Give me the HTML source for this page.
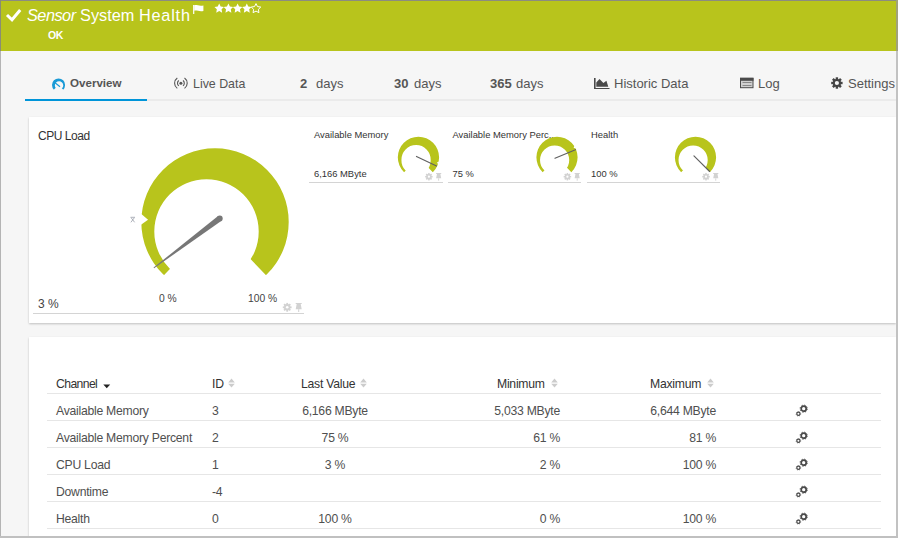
<!DOCTYPE html>
<html><head><meta charset="utf-8">
<style>
*{box-sizing:border-box;margin:0;padding:0}
html,body{width:898px;height:538px;overflow:hidden;background:#f6f6f6;font-family:"Liberation Sans",sans-serif;color:#555}
.a{position:absolute;white-space:nowrap}
.ttl{font-size:16.3px;color:#fff;line-height:16px}
.tab{font-size:13px;color:#555;line-height:13px}
.panel{position:absolute;background:#fff;box-shadow:0 1px 2px rgba(0,0,0,.22)}
.th{font-size:12.2px;letter-spacing:-0.25px;color:#333;line-height:12px}
.td{font-size:12.2px;letter-spacing:-0.25px;color:#4f4f4f;line-height:12px}
.hl{position:absolute;height:1px;background:#e6e6e6}
.sm{font-size:9.4px;color:#333;line-height:10px}
</style></head><body>
<div class="a" style="left:1px;top:1px;width:895px;height:50px;background:#b8c41c"></div>
<svg class="a" style="left:0;top:0" width="898" height="51"><path d="M7 15 L12 19.8 L20.2 10" fill="none" stroke="#fff" stroke-width="3"/><path d="M193.7 5 V14" stroke="#fff" stroke-width="1.2"/><path d="M194.2 5.2 C196.5 4.3 199 6.5 203.4 5.4 V11 C199 12 196.5 9.8 194.2 10.8 Z" fill="#fff"/><path d="M219.2,3.6 L217.73,6.58 L214.44,7.05 L216.82,9.37 L216.26,12.65 L219.2,11.1 L222.14,12.65 L221.58,9.37 L223.96,7.05 L220.67,6.58 Z" fill="#fff"/><path d="M228.4,3.6 L226.93,6.58 L223.64,7.05 L226.02,9.37 L225.46,12.65 L228.4,11.1 L231.34,12.65 L230.78,9.37 L233.16,7.05 L229.87,6.58 Z" fill="#fff"/><path d="M237.6,3.6 L236.13,6.58 L232.84,7.05 L235.22,9.37 L234.66,12.65 L237.6,11.1 L240.54,12.65 L239.98,9.37 L242.36,7.05 L239.07,6.58 Z" fill="#fff"/><path d="M246.8,3.6 L245.33,6.58 L242.04,7.05 L244.42,9.37 L243.86,12.65 L246.8,11.1 L249.74,12.65 L249.18,9.37 L251.56,7.05 L248.27,6.58 Z" fill="#fff"/><path d="M256,3.6 L254.53,6.58 L251.24,7.05 L253.62,9.37 L253.06,12.65 L256,11.1 L258.94,12.65 L258.38,9.37 L260.76,7.05 L257.47,6.58 Z" fill="none" stroke="#fff" stroke-width="1" stroke-linejoin="miter"/></svg>
<div class="a ttl" style="left:27px;top:7px"><i style="letter-spacing:-0.5px">Sensor</i> System <span style="letter-spacing:0.8px">Health</span></div>
<div class="a" style="left:48px;top:30px;font-size:10.5px;letter-spacing:-0.4px;font-weight:bold;color:#fff;line-height:11px">OK</div>
<div class="a" style="left:25px;top:99px;width:122px;height:2px;background:#0095d9"></div>
<div class="a" style="left:147px;top:99px;width:749px;height:2px;background:#ebebeb"></div>
<svg class="a" style="left:0;top:70px" width="80" height="25"><g transform="translate(0,-70)"><clipPath id="ov"><path d="M58.55 85 L49 94.55 L49 75.45 L68.1 75.45 L68.1 94.55 Z"/></clipPath><path d="M52 85 a6.55 6.55 0 1 0 13.1 0 a6.55 6.55 0 1 0 -13.1 0 Z M54.85 85.4 a4.2 4.2 0 1 0 8.4 0 a4.2 4.2 0 1 0 -8.4 0 Z" fill="#1a9ad6" fill-rule="evenodd" clip-path="url(#ov)"/><path d="M55 82.8 L60 86.8" stroke="#1a9ad6" stroke-width="1.2"/></g></svg>
<div class="a tab" style="left:70px;top:76px;font-size:11.6px;font-weight:bold">Overview</div>
<svg class="a" style="left:0;top:70px" width="260" height="25"><g transform="translate(0,-70)"><circle cx="180.9" cy="83.2" r="1.5" fill="#555"/><path d="M182.99 80.52 A3.4 3.4 0 0 1 182.99 85.88 M178.81 80.52 A3.4 3.4 0 0 0 178.81 85.88 M184.51 78.04 A6.3 6.3 0 0 1 184.51 88.36 M177.29 78.04 A6.3 6.3 0 0 0 177.29 88.36" fill="none" stroke="#555" stroke-width="1.1"/></g></svg>
<div class="a tab" style="left:193px;top:78px;font-size:12.4px">Live Data</div>
<div class="a tab" style="left:300px;top:77px"><b>2</b></div><div class="a tab" style="left:316px;top:77px">days</div>
<div class="a tab" style="left:394px;top:77px"><b>30</b></div><div class="a tab" style="left:414px;top:77px">days</div>
<div class="a tab" style="left:490px;top:77px"><b>365</b></div><div class="a tab" style="left:516px;top:77px">days</div>
<svg class="a" style="left:590px;top:74px" width="22" height="18"><g transform="translate(-590,-74)"><rect x="594" y="78" width="1.6" height="11" fill="#4a4a4a"/><rect x="594" y="88" width="15.5" height="1" fill="#4a4a4a"/><path d="M596.3 86.8 L596.3 82.5 L599.5 79 L603.4 83 L606.4 80.8 L608.3 86.8 Z" fill="#4a4a4a"/></g></svg>
<div class="a tab" style="left:614px;top:77px">Historic Data</div>
<svg class="a" style="left:736px;top:74px" width="22" height="18"><g transform="translate(-736,-74)"><rect x="740.5" y="78.3" width="12.5" height="9.4" fill="#d0d0d0" stroke="#4a4a4a" stroke-width="1"/><rect x="740" y="77.8" width="13.5" height="3" fill="#4a4a4a"/><rect x="742.5" y="82" width="9" height="1" fill="#888"/><rect x="742.5" y="85" width="9" height="1" fill="#888"/></g></svg>
<div class="a tab" style="left:758px;top:77px">Log</div>
<svg class="a" style="left:826px;top:74px" width="22" height="18"><g transform="translate(10.9,9)" fill="#444"><circle r="4.1"/><rect x="-1.2" y="-5.7" width="2.4" height="11.4" transform="rotate(0)"/><rect x="-1.2" y="-5.7" width="2.4" height="11.4" transform="rotate(45)"/><rect x="-1.2" y="-5.7" width="2.4" height="11.4" transform="rotate(90)"/><rect x="-1.2" y="-5.7" width="2.4" height="11.4" transform="rotate(135)"/><circle r="2.1" fill="#f6f6f6"/></g></svg>
<div class="a tab" style="left:848px;top:77px">Settings</div>
<div class="panel" style="left:29px;top:117px;width:867px;height:206px"></div>
<div class="a" style="left:38px;top:130px;font-size:12px;letter-spacing:-0.45px;color:#333;line-height:12px">CPU Load</div>
<div class="a" style="left:38px;top:298px;font-size:12px;color:#444;line-height:12px">3 %</div>
<div class="hl" style="left:33px;top:313px;width:271px;background:#d4d4d4"></div>
<div class="a sm" style="left:314px;top:130px">Available Memory</div>
<div class="a sm" style="left:314px;top:169px">6,166 MByte</div>
<div class="hl" style="left:309px;top:182px;width:134px;background:#d4d4d4"></div>
<div class="a sm" style="left:452.5px;top:130px">Available Memory Perc...</div>
<div class="a sm" style="left:452.5px;top:169px">75 %</div>
<div class="hl" style="left:448px;top:182px;width:133px;background:#d4d4d4"></div>
<div class="a sm" style="left:591px;top:130px">Health</div>
<div class="a sm" style="left:591px;top:169px">100 %</div>
<div class="hl" style="left:587px;top:182px;width:133px;background:#d4d4d4"></div>
<div class="a" style="left:159px;top:293px;font-size:10.3px;color:#444;line-height:11px">0 %</div>
<div class="a" style="left:248px;top:293px;font-size:10.3px;color:#444;line-height:11px">100 %</div>
<svg class="a" style="left:0;top:0" width="898" height="538"><clipPath id="g0c"><path d="M215 222 L128.1 312.62 L89.45 96.45 L340.55 96.45 L301.9 312.62 Z"/></clipPath><path d="M141.3 222 a73.7 73.7 0 1 0 147.4 0 a73.7 73.7 0 1 0 -147.4 0 Z M154.3 231.5 a52.2 52.2 0 1 0 104.4 0 a52.2 52.2 0 1 0 -104.4 0 Z" fill="#b8c41c" fill-rule="evenodd" clip-path="url(#g0c)"/><path d="M141.04 213.81 L148.04 219.66 L140.65 225.01 Z" fill="#fff"/><path d="M218.06 216.08 L153.58 267.61 L154.06 268.25 L221.54 220.72 Z" fill="#777"/><circle cx="219.8" cy="218.4" r="2.9" fill="#777"/><path d="M130.5 217.3 H135 M131.2 217.8 L134.6 222.3 M134.3 217.8 L130.9 222.3" stroke="#9aa0aa" stroke-width="0.8" fill="none"/><clipPath id="g1c"><path d="M418.45 157.35 L386.63 190.53 L372.48 111.38 L464.42 111.38 L450.27 190.53 Z"/></clipPath><path d="M397.8 157.35 a20.65 20.65 0 1 0 41.3 0 a20.65 20.65 0 1 0 -41.3 0 Z M401.44 160.01 a14.63 14.63 0 1 0 29.25 0 a14.63 14.63 0 1 0 -29.25 0 Z" fill="#b8c41c" fill-rule="evenodd" clip-path="url(#g1c)"/><path d="M438.41 164.51 L436.89 162.46 L439.25 161.49 Z" fill="#fff"/><line x1="416.47" y1="156.4" x2="436.54" y2="166.01" stroke="#606060" stroke-width="1.15" stroke-linecap="round"/><clipPath id="g2c"><path d="M557 157.35 L525.23 190.48 L511.1 111.45 L602.9 111.45 L588.77 190.48 Z"/></clipPath><path d="M536.4 157.35 a20.6 20.6 0 1 0 41.2 0 a20.6 20.6 0 1 0 -41.2 0 Z M540.03 160.01 a14.59 14.59 0 1 0 29.18 0 a14.59 14.59 0 1 0 -29.18 0 Z" fill="#b8c41c" fill-rule="evenodd" clip-path="url(#g2c)"/><path d="M576.14 148.32 L573.61 147.95 L574.59 145.6 Z" fill="#fff"/><line x1="554.97" y1="158.19" x2="575.48" y2="149.7" stroke="#606060" stroke-width="1.15" stroke-linecap="round"/><clipPath id="g3c"><path d="M695.5 157.35 L663.73 190.48 L649.6 111.45 L741.4 111.45 L727.27 190.48 Z"/></clipPath><path d="M674.9 157.35 a20.6 20.6 0 1 0 41.2 0 a20.6 20.6 0 1 0 -41.2 0 Z M678.53 160.01 a14.59 14.59 0 1 0 29.18 0 a14.59 14.59 0 1 0 -29.18 0 Z" fill="#b8c41c" fill-rule="evenodd" clip-path="url(#g3c)"/><line x1="693.94" y1="155.79" x2="709.64" y2="171.49" stroke="#606060" stroke-width="1.15" stroke-linecap="round"/><g transform="translate(287.2,307.3) scale(1.0)" fill="#d2d2d2"><circle r="3.2"/><rect x="-0.9" y="-4.4" width="1.8" height="8.8" transform="rotate(0)"/><rect x="-0.9" y="-4.4" width="1.8" height="8.8" transform="rotate(45)"/><rect x="-0.9" y="-4.4" width="1.8" height="8.8" transform="rotate(90)"/><rect x="-0.9" y="-4.4" width="1.8" height="8.8" transform="rotate(135)"/><circle r="1.3" fill="#fff"/></g><g transform="translate(298.7,307.3) scale(1.0)" fill="#d2d2d2"><path d="M-3 -4.4 H3 V-3.2 H2 L3 1.9 H-3 L-2 -3.2 H-3 Z"/><rect x="-0.5" y="1.9" width="1" height="2.8"/></g><g transform="translate(428.9,176.7) scale(0.85)" fill="#d2d2d2"><circle r="3.2"/><rect x="-0.9" y="-4.4" width="1.8" height="8.8" transform="rotate(0)"/><rect x="-0.9" y="-4.4" width="1.8" height="8.8" transform="rotate(45)"/><rect x="-0.9" y="-4.4" width="1.8" height="8.8" transform="rotate(90)"/><rect x="-0.9" y="-4.4" width="1.8" height="8.8" transform="rotate(135)"/><circle r="1.3" fill="#fff"/></g><g transform="translate(438.67,176.7) scale(0.85)" fill="#d2d2d2"><path d="M-3 -4.4 H3 V-3.2 H2 L3 1.9 H-3 L-2 -3.2 H-3 Z"/><rect x="-0.5" y="1.9" width="1" height="2.8"/></g><g transform="translate(567.4,176.7) scale(0.85)" fill="#d2d2d2"><circle r="3.2"/><rect x="-0.9" y="-4.4" width="1.8" height="8.8" transform="rotate(0)"/><rect x="-0.9" y="-4.4" width="1.8" height="8.8" transform="rotate(45)"/><rect x="-0.9" y="-4.4" width="1.8" height="8.8" transform="rotate(90)"/><rect x="-0.9" y="-4.4" width="1.8" height="8.8" transform="rotate(135)"/><circle r="1.3" fill="#fff"/></g><g transform="translate(577.17,176.7) scale(0.85)" fill="#d2d2d2"><path d="M-3 -4.4 H3 V-3.2 H2 L3 1.9 H-3 L-2 -3.2 H-3 Z"/><rect x="-0.5" y="1.9" width="1" height="2.8"/></g><g transform="translate(706,176.7) scale(0.85)" fill="#d2d2d2"><circle r="3.2"/><rect x="-0.9" y="-4.4" width="1.8" height="8.8" transform="rotate(0)"/><rect x="-0.9" y="-4.4" width="1.8" height="8.8" transform="rotate(45)"/><rect x="-0.9" y="-4.4" width="1.8" height="8.8" transform="rotate(90)"/><rect x="-0.9" y="-4.4" width="1.8" height="8.8" transform="rotate(135)"/><circle r="1.3" fill="#fff"/></g><g transform="translate(715.77,176.7) scale(0.85)" fill="#d2d2d2"><path d="M-3 -4.4 H3 V-3.2 H2 L3 1.9 H-3 L-2 -3.2 H-3 Z"/><rect x="-0.5" y="1.9" width="1" height="2.8"/></g></svg>
<div class="panel" style="left:29px;top:337px;width:867px;height:220px"></div>
<div class="a th" style="left:56px;top:378px;letter-spacing:-0.6px">Channel</div>
<svg class="a" style="left:103px;top:384px" width="8" height="5"><path d="M0.3 0.5 H7.2 L3.75 4.2 Z" fill="#222"/></svg>
<div class="a th" style="left:212px;top:378px">ID</div>
<div class="a th" style="left:301px;top:378px">Last Value</div>
<div class="a th" style="left:497px;top:378px">Minimum</div>
<div class="a th" style="left:650px;top:378px">Maximum</div>
<svg class="a" style="left:228.3px;top:378px" width="8" height="11"><path d="M0.2 4.4 L3.5 0.6 L6.8 4.4 Z M0.2 5.8 L3.5 9.6 L6.8 5.8 Z" fill="#ccc"/></svg>
<svg class="a" style="left:360.4px;top:378px" width="8" height="11"><path d="M0.2 4.4 L3.5 0.6 L6.8 4.4 Z M0.2 5.8 L3.5 9.6 L6.8 5.8 Z" fill="#ccc"/></svg>
<svg class="a" style="left:551px;top:378px" width="8" height="11"><path d="M0.2 4.4 L3.5 0.6 L6.8 4.4 Z M0.2 5.8 L3.5 9.6 L6.8 5.8 Z" fill="#ccc"/></svg>
<svg class="a" style="left:706.5px;top:378px" width="8" height="11"><path d="M0.2 4.4 L3.5 0.6 L6.8 4.4 Z M0.2 5.8 L3.5 9.6 L6.8 5.8 Z" fill="#ccc"/></svg>
<div class="hl" style="left:47px;top:393px;width:834px"></div>
<div class="a td" style="left:56px;top:405px">Available Memory</div>
<div class="a td" style="left:212px;top:405px">3</div>
<div class="a td" style="left:285px;top:405px;width:100px;text-align:center">6,166 MByte</div>
<div class="a td" style="left:460px;top:405px;width:100px;text-align:right">5,033 MByte</div>
<div class="a td" style="left:616px;top:405px;width:100px;text-align:right">6,644 MByte</div>
<svg class="a" style="left:795px;top:404px" width="13" height="13"><circle cx="8.7" cy="4.7" r="2.5" fill="none" stroke="#4a4a4a" stroke-width="1.7"/><circle cx="8.7" cy="4.7" r="3.6" fill="none" stroke="#4a4a4a" stroke-width="0.9" stroke-dasharray="1.4 1.43"/><circle cx="3.4" cy="9.8" r="1.6" fill="none" stroke="#4a4a4a" stroke-width="1.2"/><circle cx="3.4" cy="9.8" r="2.3" fill="none" stroke="#4a4a4a" stroke-width="0.6" stroke-dasharray="0.9 0.9"/></svg>
<div class="hl" style="left:47px;top:420px;width:834px"></div>
<div class="a td" style="left:56px;top:432px">Available Memory Percent</div>
<div class="a td" style="left:212px;top:432px">2</div>
<div class="a td" style="left:285px;top:432px;width:100px;text-align:center">75 %</div>
<div class="a td" style="left:460px;top:432px;width:100px;text-align:right">61 %</div>
<div class="a td" style="left:616px;top:432px;width:100px;text-align:right">81 %</div>
<svg class="a" style="left:795px;top:431px" width="13" height="13"><circle cx="8.7" cy="4.7" r="2.5" fill="none" stroke="#4a4a4a" stroke-width="1.7"/><circle cx="8.7" cy="4.7" r="3.6" fill="none" stroke="#4a4a4a" stroke-width="0.9" stroke-dasharray="1.4 1.43"/><circle cx="3.4" cy="9.8" r="1.6" fill="none" stroke="#4a4a4a" stroke-width="1.2"/><circle cx="3.4" cy="9.8" r="2.3" fill="none" stroke="#4a4a4a" stroke-width="0.6" stroke-dasharray="0.9 0.9"/></svg>
<div class="hl" style="left:47px;top:447px;width:834px"></div>
<div class="a td" style="left:56px;top:459px">CPU Load</div>
<div class="a td" style="left:212px;top:459px">1</div>
<div class="a td" style="left:285px;top:459px;width:100px;text-align:center">3 %</div>
<div class="a td" style="left:460px;top:459px;width:100px;text-align:right">2 %</div>
<div class="a td" style="left:616px;top:459px;width:100px;text-align:right">100 %</div>
<svg class="a" style="left:795px;top:458px" width="13" height="13"><circle cx="8.7" cy="4.7" r="2.5" fill="none" stroke="#4a4a4a" stroke-width="1.7"/><circle cx="8.7" cy="4.7" r="3.6" fill="none" stroke="#4a4a4a" stroke-width="0.9" stroke-dasharray="1.4 1.43"/><circle cx="3.4" cy="9.8" r="1.6" fill="none" stroke="#4a4a4a" stroke-width="1.2"/><circle cx="3.4" cy="9.8" r="2.3" fill="none" stroke="#4a4a4a" stroke-width="0.6" stroke-dasharray="0.9 0.9"/></svg>
<div class="hl" style="left:47px;top:474px;width:834px"></div>
<div class="a td" style="left:56px;top:486px">Downtime</div>
<div class="a td" style="left:212px;top:486px">-4</div>
<div class="a td" style="left:285px;top:486px;width:100px;text-align:center"></div>
<div class="a td" style="left:460px;top:486px;width:100px;text-align:right"></div>
<div class="a td" style="left:616px;top:486px;width:100px;text-align:right"></div>
<svg class="a" style="left:795px;top:485px" width="13" height="13"><circle cx="8.7" cy="4.7" r="2.5" fill="none" stroke="#4a4a4a" stroke-width="1.7"/><circle cx="8.7" cy="4.7" r="3.6" fill="none" stroke="#4a4a4a" stroke-width="0.9" stroke-dasharray="1.4 1.43"/><circle cx="3.4" cy="9.8" r="1.6" fill="none" stroke="#4a4a4a" stroke-width="1.2"/><circle cx="3.4" cy="9.8" r="2.3" fill="none" stroke="#4a4a4a" stroke-width="0.6" stroke-dasharray="0.9 0.9"/></svg>
<div class="hl" style="left:47px;top:501px;width:834px"></div>
<div class="a td" style="left:56px;top:513px">Health</div>
<div class="a td" style="left:212px;top:513px">0</div>
<div class="a td" style="left:285px;top:513px;width:100px;text-align:center">100 %</div>
<div class="a td" style="left:460px;top:513px;width:100px;text-align:right">0 %</div>
<div class="a td" style="left:616px;top:513px;width:100px;text-align:right">100 %</div>
<svg class="a" style="left:795px;top:512px" width="13" height="13"><circle cx="8.7" cy="4.7" r="2.5" fill="none" stroke="#4a4a4a" stroke-width="1.7"/><circle cx="8.7" cy="4.7" r="3.6" fill="none" stroke="#4a4a4a" stroke-width="0.9" stroke-dasharray="1.4 1.43"/><circle cx="3.4" cy="9.8" r="1.6" fill="none" stroke="#4a4a4a" stroke-width="1.2"/><circle cx="3.4" cy="9.8" r="2.3" fill="none" stroke="#4a4a4a" stroke-width="0.6" stroke-dasharray="0.9 0.9"/></svg>
<div class="hl" style="left:47px;top:528px;width:834px"></div>
<div class="a" style="left:0;top:0;width:898px;height:1px;background:#8c8c80"></div>
<div class="a" style="left:0;top:0;width:1px;height:538px;background:#b4b4b4"></div>
<div class="a" style="left:896px;top:0;width:2px;height:538px;background:#c2c2c2"></div>
<div class="a" style="left:0;top:536px;width:898px;height:2px;background:#c0c0c0"></div>
<div class="a" style="left:0;top:0;width:1px;height:51px;background:#8a8c74"></div>
<div class="a" style="left:896px;top:0;width:2px;height:51px;background:#a0a27a"></div>
</body></html>
